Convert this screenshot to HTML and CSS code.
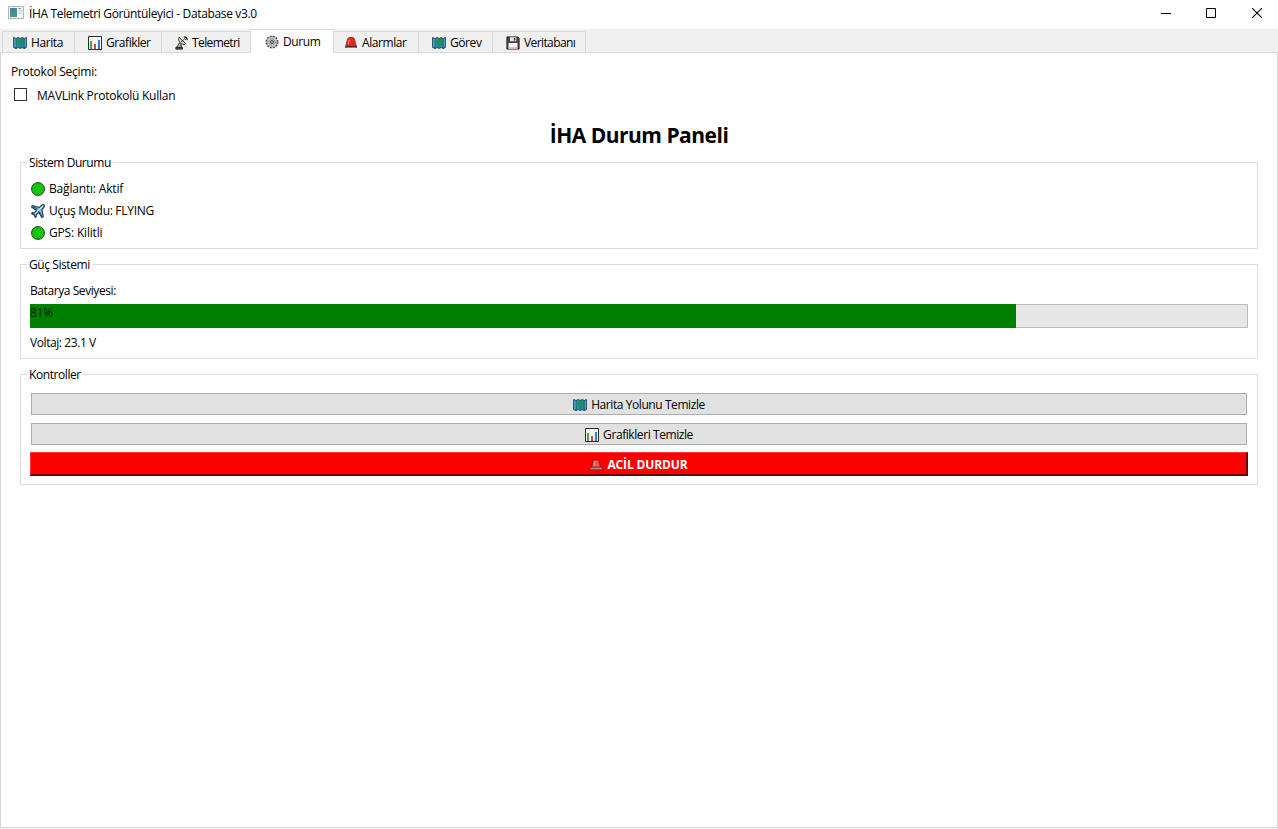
FILE: index.html
```html
<!DOCTYPE html>
<html lang="tr">
<head>
<meta charset="utf-8">
<title>İHA Telemetri Görüntüleyici - Database v3.0</title>
<link rel="stylesheet" href="styles.css">
</head>
<body>
<svg class="sprite" aria-hidden="true">
  <defs>
    <linearGradient id="appfill" x1="0" y1="0" x2="0" y2="1"><stop offset="0" stop-color="#4a7fa5"/><stop offset="1" stop-color="#4d9a78"/></linearGradient>
    <linearGradient id="sea" x1="0" y1="0" x2="1" y2="0"><stop offset="0" stop-color="#3c9fc4"/><stop offset=".5" stop-color="#1686a0"/><stop offset="1" stop-color="#3089c8"/></linearGradient>
    <symbol id="map" viewBox="0 0 14 14">
      <path d="M.6 1.5 3 2.5 5.3 1.5 7.2 2.5 9 1.5l2.2 1 2.2-1v10l-2.2 1-2.2-1-1.8 1-1.9-1-2.3 1-2.4-1z" fill="url(#sea)" stroke="#1c3f50" stroke-width=".9"/>
      <path d="M4.3 4 7 3.3 10 4l.8 2-1.3 2.7L7.5 10 6 8.3 4.4 7z" fill="#1c9450"/>
      <path d="M3 2.5v10M11.2 2.5v10" stroke="#174f63" stroke-width=".8"/>
      <path d="M2 2.5v8.5M12.3 2.5v8.5" stroke="#83c5e0" stroke-width=".6"/>
    </symbol>
    <symbol id="chart" viewBox="0 0 14 14">
      <path d="M.5.5h13v13H.5z" fill="#fff" stroke="#2b2b2b"/>
      <path d="M1 4h12M1 7h12M4.5 1v12M9.5 1v12" stroke="#dedede" stroke-width=".6"/>
      <path d="M2 5h2v8H2z" fill="#38b044"/><path d="M6 8h2v5H6z" fill="#e2452f"/><path d="M10 4h2v9h-2z" fill="#2f83d1"/>
    </symbol>
    <symbol id="dish" viewBox="0 0 14 14">
      <path d="M4 1.3c-1.3 3 .8 6.8 5.4 7.2l1.2-1z" fill="#d9d9d4" stroke="#222" stroke-width=".9"/>
      <path d="M6.2 5.8 9.7 2.8" stroke="#222"/>
      <path d="m4.3 7-2.8 4.5h5.2L6 8.2z" fill="#aaa" stroke="#222" stroke-width=".8"/>
      <path d="M.8 11.4h6.7v1.8H.8z" fill="#555" stroke="#111" stroke-width=".7"/>
      <path d="M8.8.8c2.1 0 3.4 1.5 3.4 3.5M9 2.6c.8 0 1.4.6 1.4 1.5" fill="none" stroke="#252515" stroke-width="1.2"/>
      <circle cx="9.5" cy="3.3" r=".9" fill="#bddb2e"/>
    </symbol>
    <symbol id="gear" viewBox="0 0 14 14">
      <circle cx="7" cy="7" r="5.8" fill="none" stroke="#444" stroke-width="1.4" stroke-dasharray="1.9 1.14"/>
      <circle cx="7" cy="7" r="5" fill="#dedede" stroke="#666" stroke-width=".6"/>
      <circle cx="7" cy="7" r="3.3" fill="#bbb" stroke="#666" stroke-width=".8" stroke-dasharray="1.6 1"/>
      <circle cx="7" cy="7" r="1.4" fill="#eee" stroke="#222" stroke-width=".9"/>
    </symbol>
    <symbol id="siren" viewBox="0 0 14 14">
      <path d="M1.8 10.5 3.4 3.5C3.8 2 4.6 1.4 6 1.4h2c1.4 0 2.2.6 2.6 2.1l1.6 7z" fill="#e02620" stroke="#7b1b18" stroke-width=".7"/>
      <path d="M5.2 3.6 4.4 8.5" stroke="#ff897f" stroke-width="1.1"/>
      <path d="M1 9.8h2.6v2H1zM10.4 9.8H13v2h-2.6z" fill="#4a3335"/>
      <path d="M3.6 10.8h6.8" stroke="#5a2b2b" stroke-width="1.6"/>
    </symbol>
    <symbol id="siren-soft" viewBox="0 0 14 14">
      <path d="M2.6 9.5 3.6 3.8C3.9 2.4 4.8 1.8 6 1.8h2c1.2 0 2.1.6 2.4 2l1 5.7z" fill="#ec5448" stroke="#7c1714" stroke-width=".9"/>
      <path d="M5.7 3.4v5" stroke="#ff9a8d"/>
      <path d="M.9 9.2h12.2v2.6H.9z" fill="#b79390" stroke="#682422" stroke-width=".8"/>
    </symbol>
    <symbol id="disk" viewBox="0 0 14 14">
      <path d="M.9.9h11l1.2 1.2v11H.9z" fill="#4b464b" stroke="#1d1a1d" stroke-width=".9"/>
      <path d="M4 1.2h6.3v4H4z" fill="#e7e7e7"/><path d="M7.8 1.8h1.5v2.8H7.8z" fill="#333"/>
      <path d="M2.5 7h9v5.8h-9z" fill="#fff"/><path d="M2.5 11.2h9v1.6h-9z" fill="#e3a9bd"/>
    </symbol>
    <symbol id="dot" viewBox="0 0 14 14"><circle cx="7" cy="7" r="6.4" fill="#16c60c" stroke="#1b3f1b" stroke-width="1"/></symbol>
    <symbol id="plane" viewBox="0 0 14 14">
      <path d="M12.8.7c-1-.5-2 .2-2.9 1.1L8.4 3.5 1.3 1.6.5 3l5 3.5L3.4 9 1.3 8.7l-.8.8 2.7 1.4 1.2 2.5.8-.7-.1-2L7.8 8.5l3.1 5 1.4-.9-1.4-7 1.5-1.7c.9-1 1.4-2.3.4-3.2z" fill="#8db8d6" stroke="#143450" stroke-width="1.1"/>
      <path d="m12 1.8-7.8 8" stroke="#eef7fb" stroke-width="1"/><path d="m7.8 7 2.9 4.8M6.5 5.3 2.4 2.9" stroke="#235a8a" stroke-width="1.1"/>
    </symbol>
  </defs>
</svg>
<div class="window">
  <header class="titlebar">
    <svg class="app-icon" viewBox="0 0 16 14"><path d="M.5.5h15v12H.5z" fill="#f2f5f5" stroke="#aeb4b6"/><path d="M2 2h7v9H2z" fill="url(#appfill)"/><path d="M10.5 3h3.5M10.5 5h3.5M10.5 7h3.5" stroke="#c4cccc"/><path d="M10.5 2.5h2" stroke="#5d9f89"/></svg>
    <span class="title snug">İHA Telemetri Görüntüleyici - Database v3.0</span>
    <div class="controls">
      <svg viewBox="0 0 10 10"><path d="M0 5.5h10" stroke="#000"/></svg>
      <svg viewBox="0 0 10 10"><path d="M.5.5h9v9h-9z" fill="none" stroke="#000"/></svg>
      <svg viewBox="0 0 10 10"><path d="m0 0 10 10M10 0 0 10" stroke="#000" stroke-width="1.1"/></svg>
    </div>
  </header>
  <nav class="tabs">
    <div class="tab tab-map"><svg class="icon"><use href="#map"/></svg><span class="tight">Harita</span></div>
    <div class="tab tab-chart"><svg class="icon"><use href="#chart"/></svg><span class="tight">Grafikler</span></div>
    <div class="tab tab-tele"><svg class="icon"><use href="#dish"/></svg><span class="tightest">Telemetri</span></div>
    <div class="tab tab-status active"><svg class="icon"><use href="#gear"/></svg><span class="tight">Durum</span></div>
    <div class="tab tab-alarm"><svg class="icon"><use href="#siren"/></svg><span class="tight">Alarmlar</span></div>
    <div class="tab tab-task"><svg class="icon"><use href="#map"/></svg><span class="tight">Görev</span></div>
    <div class="tab tab-db"><svg class="icon"><use href="#disk"/></svg><span class="tightest">Veritabanı</span></div>
  </nav>
  <main class="pane">
    <div class="protocol"><span class="loose">Protokol Seçimi:</span></div>
    <div class="check"><span class="box"></span><span class="loose">MAVLink Protokolü Kullan</span></div>
    <h1 class="heading"><span>İHA Durum Paneli</span></h1>
    <section class="group group-system">
      <h2 class="legend"><span class="tight">Sistem Durumu</span></h2>
      <div class="row"><svg class="icon"><use href="#dot"/></svg><span class="looser">Bağlantı: Aktif</span></div>
      <div class="row"><svg class="icon"><use href="#plane"/></svg><span>Uçuş Modu: FLYING</span></div>
      <div class="row"><svg class="icon"><use href="#dot"/></svg><span class="looser">GPS: Kilitli</span></div>
    </section>
    <section class="group group-power">
      <h2 class="legend"><span class="tight">Güç Sistemi</span></h2>
      <div class="line"><span class="tight">Batarya Seviyesi:</span></div>
      <div class="battery"><div class="charge" style="width:80.95%"><span>81%</span></div></div>
      <div class="line"><span class="tight">Voltaj: 23.1 V</span></div>
    </section>
    <section class="group group-controls">
      <h2 class="legend"><span class="tight">Kontroller</span></h2>
      <button class="btn"><svg class="icon"><use href="#map"/></svg><span class="tight">Harita Yolunu Temizle</span></button>
      <button class="btn"><svg class="icon"><use href="#chart"/></svg><span class="tight">Grafikleri Temizle</span></button>
      <button class="btn danger"><svg class="icon"><use href="#siren-soft"/></svg><span class="stop">ACİL DURDUR</span></button>
    </section>
  </main>
</div>
</body>
</html>
```
FILE: styles.css
```css
* { box-sizing: border-box; }
body { margin: 0; background: #f0f0f0; color: #000; font: 12px/16px "Open Sans", "Noto Sans", sans-serif; letter-spacing: -.3px; overflow: hidden; }
.sprite { position: absolute; width: 0; height: 0; }
.window { height: 829px; display: flex; flex-direction: column; }
span { white-space: nowrap; }
.icon { width: 14px; height: 14px; flex: none; }

/* Tracking steps for labels */
.looser { letter-spacing: -.18px; }
.loose { letter-spacing: -.25px; }
.snug { letter-spacing: -.35px; }
.tight { letter-spacing: -.42px; }
.tightest { letter-spacing: -.6px; }
.stop { letter-spacing: -.12px; }

.titlebar { height: 29px; flex: none; background: #fff; display: flex; align-items: center; padding: 0 16px 3px 8px; }
.title { padding-top: 2px; }
.app-icon { width: 16px; height: 14px; margin-right: 5px; }
.controls { margin-left: auto; display: flex; gap: 36px; }
.controls svg { width: 10px; height: 10px; }
.controls svg:first-child { margin-right: -1px; }

.tabs { height: 23px; flex: none; display: flex; align-items: flex-end; padding-left: 2px; }
.tab { height: 21px; display: flex; align-items: center; gap: 4px; padding: 2px 0 0 10px; border: solid #d9d9d9; border-width: 1px 1px 0 0; }
.tab-map { width: 73px; border-left-width: 1px; }
.tab-chart { width: 87px; padding-left: 13px; }
.tab-tele { width: 88px; padding-left: 13px; gap: 3px; border-right: 0; }
.tab-status { width: 84px; padding-left: 14px; }
.tab-alarm { width: 85px; }
.tab-task { width: 74px; padding-left: 13px; }
.tab-db { width: 93px; padding-left: 13px; }
.active { height: 24px; margin-bottom: -1px; background: #fff; border-left-width: 1px; z-index: 1; padding-bottom: 1px; }

.pane { height: 776px; background: #fff; border: 1px solid #d9d9d9; padding: 11px 19px 0; }
.protocol { height: 16px; margin-left: -9px; }
.check { height: 16px; margin: 8px 0 0 -6px; display: flex; align-items: center; gap: 10px; }
.box { width: 13px; height: 13px; border: 1px solid #333; margin-top: -4px; }
.heading { margin: 17px 0 0; height: 28px; font-size: 21px; line-height: 28px; text-align: center; font-weight: 700; letter-spacing: -.5px; }

.group { border: 1px solid #dcdcdc; padding: 0 9px; }
.legend { height: 16px; width: max-content; margin: -8px 0 0 -3px; padding: 0 2px; background: #fff; font: inherit; }
.group-system { height: 87px; margin-top: 13px; }
.group-power { height: 95px; margin-top: 15px; }
.group-controls { height: 111px; margin-top: 15px; }
.row { height: 22px; display: flex; align-items: center; gap: 4px; padding-left: 1px; }
.group-system .legend { margin-bottom: 7px; }
.group-power .legend { margin-bottom: 10px; }
.group-controls .legend { margin-bottom: 10px; }
.line { height: 16px; }
.battery { height: 24px; margin: 5px 0 7px; background: #e6e6e6; box-shadow: inset 0 0 0 1px #bcbcbc; }
.charge { height: 24px; background: #008000; color: #001c00; padding-top: 1px; }

.btn { height: 22px; margin: 0 1px 8px; padding: 1px 0 0; border: 1px solid #adadad; background: #e1e1e1; color: #000; font: inherit; letter-spacing: inherit; display: flex; align-items: center; justify-content: center; gap: 4px; width: calc(100% - 2px); }
.danger { width: 100%; height: 24px; margin: -1px 0 0; padding-top: 2px; background: #f00; color: #fff; font-weight: 700; border: solid; border-width: 1px 2px 2px 1px; border-color: #f33 #6b0000 #6b0000 #f33; }
```
